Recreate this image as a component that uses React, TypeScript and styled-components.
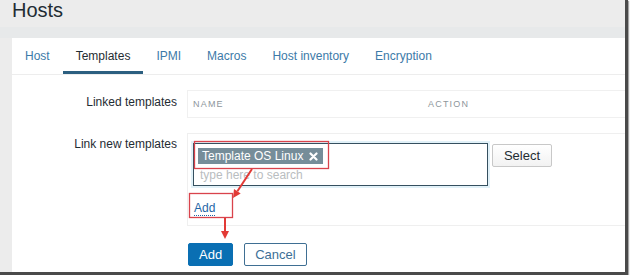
import React from 'react';
import styled, { createGlobalStyle } from 'styled-components';

const GlobalStyle = createGlobalStyle`
  body {
    margin: 0;
    background: #fff;
    font-family: 'Liberation Sans', Arial, sans-serif;
  }
`;

const Frame = styled.div`
  position: relative;
  width: 625px;
  height: 272px;
  display: flex;
  flex-direction: column;
  background: #ececec;
  border-right: 3px solid #4a4a4a;
  border-bottom: 3px solid #4a4a4a;
  box-shadow: 1px 1px 1px rgba(0, 0, 0, 0.35);
  overflow: hidden;
`;

const Title = styled.h1`
  margin: 0;
  height: 27px;
  padding-left: 12px;
  font-size: 20px;
  line-height: 20px;
  font-weight: normal;
  color: #1f2c33;
`;

const Strip = styled.div`
  height: 11px;
  background: #e7e9ea;
`;

const Panel = styled.div`
  flex: 1;
  margin-left: 12px;
  background: #fff;
`;

const TabBar = styled.div`
  display: flex;
  height: 36px;
  border-bottom: 1px solid #ededed;
`;

const Tab = styled.div<{ $active?: boolean }>`
  display: flex;
  align-items: center;
  box-sizing: border-box;
  height: 36px;
  padding: 3px 13px 0;
  font-size: 12px;
  color: ${(props) => (props.$active ? '#1f2c33' : '#3c7aa8')};
  border-bottom: 3px solid ${(props) => (props.$active ? '#2c5f80' : 'transparent')};
`;

const Form = styled.div`
  display: grid;
  grid-template-columns: 165px 1fr;
  column-gap: 10px;
  row-gap: 15px;
  padding-top: 15px;
`;

const Label = styled.div<{ $top: number }>`
  text-align: right;
  font-size: 12px;
  line-height: 18px;
  padding-top: ${(props) => props.$top}px;
  color: #1f2c33;
`;

const LinkedTable = styled.div`
  display: grid;
  grid-template-columns: 235px 1fr;
  align-items: center;
  height: 26px;
  border: 1px solid #f0f0f0;
  border-right: none;
`;

const HeaderCell = styled.div`
  padding-left: 5px;
  font-size: 9px;
  letter-spacing: 1.2px;
  text-transform: uppercase;
  color: #8d969b;
`;

const NewBox = styled.div`
  border: 1px solid #efefef;
  border-right: none;
  padding: 9px 0 9px 5px;
`;

const PickerRow = styled.div`
  display: flex;
  align-items: flex-start;
  gap: 4px;
`;

const MultiSelect = styled.div`
  box-sizing: border-box;
  width: 295px;
  height: 43px;
  display: flex;
  flex-direction: column;
  align-items: flex-start;
  padding: 4px 4px 2px;
  border: 1px solid #35505f;
  box-shadow: 0 0 0 2px #e1f1f8;
`;

const Tag = styled.span`
  display: inline-flex;
  align-items: center;
  gap: 6px;
  height: 16px;
  padding: 0 5px 0 4px;
  background: #768d99;
  color: #fff;
  font-size: 12px;
  line-height: 16px;
`;

const Placeholder = styled.span`
  margin-top: 3px;
  padding-left: 2px;
  font-size: 12px;
  line-height: 16px;
  color: #b9bdc0;
`;

const SelectButton = styled.button`
  margin-top: 1px;
  width: 60px;
  height: 23px;
  padding: 0;
  border: 1px solid #c8c8c8;
  border-radius: 2px;
  background: linear-gradient(#ffffff, #f2f2f2);
  font-family: inherit;
  font-size: 13px;
  color: #1f2c33;
`;

const AddLinkRow = styled.div`
  margin-top: 12px;
  padding-left: 1px;
`;

const AddLink = styled.span`
  display: inline-block;
  font-size: 12px;
  line-height: 14px;
  color: #1f65a6;
  border-bottom: 1px dotted #1f65a6;
`;

const ButtonRow = styled.div`
  grid-column: 2;
  display: flex;
  gap: 11px;
  margin-top: 2px;
  padding-left: 1px;
`;

const Button = styled.button<{ $primary?: boolean }>`
  height: 23px;
  padding: 0 10px;
  border-radius: 2px;
  font-family: inherit;
  font-size: 13px;
  border: 1px solid ${(props) => (props.$primary ? '#0a6fb3' : '#3f6f93')};
  background: ${(props) => (props.$primary ? '#0a6fb3' : '#fff')};
  color: ${(props) => (props.$primary ? '#fff' : '#3d6f96')};
`;

const Annotations = styled.svg`
  position: absolute;
  left: 0;
  top: 0;
  pointer-events: none;
`;

const RemoveIcon = () => (
  <svg width="9" height="9" viewBox="0 0 9 9">
    <path d="M1.5 1.5 L7.5 7.5 M7.5 1.5 L1.5 7.5" stroke="#fff" strokeWidth="2.2" strokeLinecap="round" />
  </svg>
);

const App = () => {
  const tabs = ['Host', 'Templates', 'IPMI', 'Macros', 'Host inventory', 'Encryption'];

  return (
    <>
      <GlobalStyle />
      <Frame>
        <Title>Hosts</Title>
        <Strip />
        <Panel>
          <TabBar>
            {tabs.map((tab) => (
              <Tab key={tab} $active={tab === 'Templates'}>
                {tab}
              </Tab>
            ))}
          </TabBar>
          <Form>
            <Label $top={3}>Linked templates</Label>
            <LinkedTable>
              <HeaderCell>Name</HeaderCell>
              <HeaderCell>Action</HeaderCell>
            </LinkedTable>

            <Label $top={2}>Link new templates</Label>
            <NewBox>
              <PickerRow>
                <MultiSelect>
                  <Tag>
                    Template OS Linux
                    <RemoveIcon />
                  </Tag>
                  <Placeholder>type here to search</Placeholder>
                </MultiSelect>
                <SelectButton>Select</SelectButton>
              </PickerRow>
              <AddLinkRow>
                <AddLink>Add</AddLink>
              </AddLinkRow>
            </NewBox>

            <ButtonRow>
              <Button $primary>Add</Button>
              <Button>Cancel</Button>
            </ButtonRow>
          </Form>
        </Panel>

        <Annotations width="625" height="272">
          <rect x="194.5" y="141.5" width="134" height="27" fill="none" stroke="#d9434c" strokeWidth="1.3" />
          <rect x="189.5" y="193.5" width="43" height="24" fill="none" stroke="#d9434c" strokeWidth="1.3" />
          <line x1="252" y1="169" x2="237.4" y2="191.3" stroke="#e23a36" strokeWidth="2" />
          <polygon points="233,198 240.7,193.5 234,189.1" fill="#e23a36" />
          <line x1="225" y1="218" x2="225" y2="231" stroke="#e23a36" strokeWidth="2" />
          <polygon points="225,239 221,231 229,231" fill="#e23a36" />
        </Annotations>
      </Frame>
    </>
  );
};

export default App;
